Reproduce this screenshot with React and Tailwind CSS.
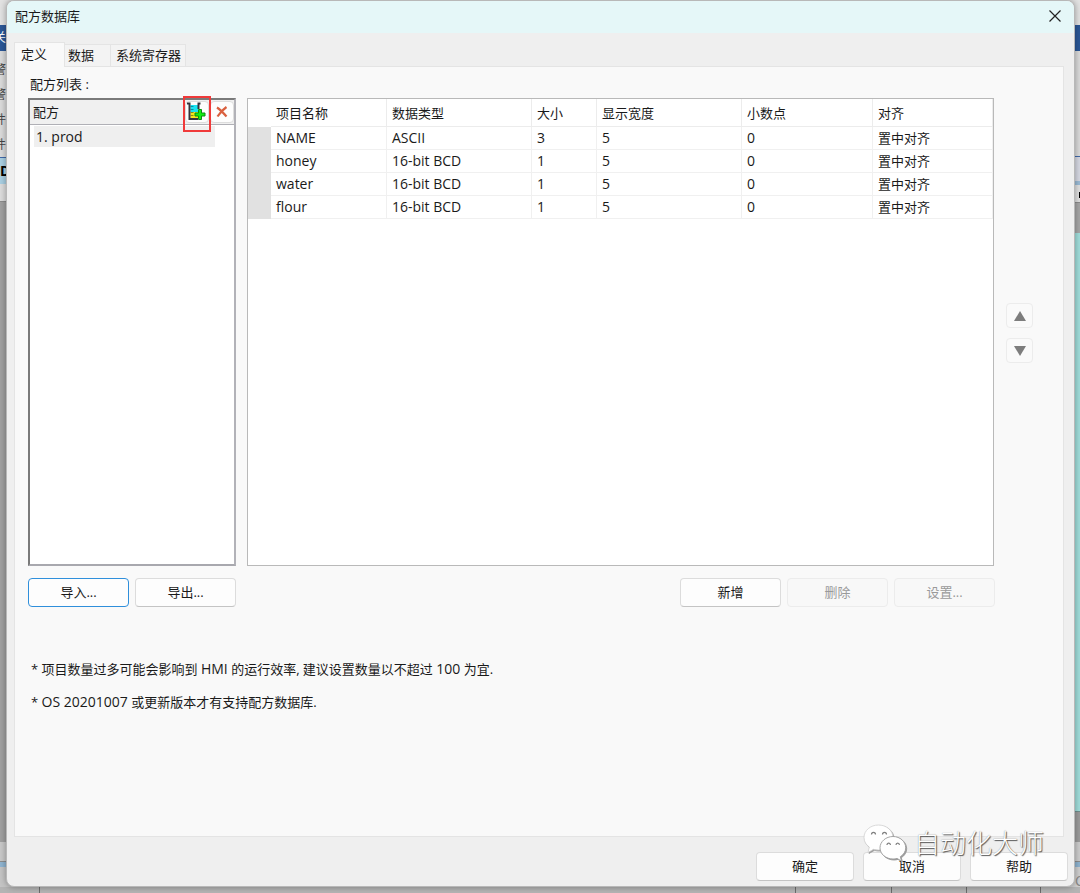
import React from "react";

const COLUMNS = ["项目名称", "数据类型", "大小", "显示宽度", "小数点", "对齐"];

const ITEMS = [
  ["NAME", "ASCII", "3", "5", "0", "置中对齐"],
  ["honey", "16-bit BCD", "1", "5", "0", "置中对齐"],
  ["water", "16-bit BCD", "1", "5", "0", "置中对齐"],
  ["flour", "16-bit BCD", "1", "5", "0", "置中对齐"],
];

const BUTTON_STYLES = {
  normal: "border-[#dcdcdc] border-b-[#c4c4c4] bg-[#fdfdfd] text-[#1a1a1a]",
  focused: "border-[#2f8fdb] bg-[#fdfdfd] text-[#1a1a1a]",
  disabled: "border-[#ececec] bg-[#f8f8f8] text-[#9a9a9a]",
};

function PushButton({ children, kind = "normal", size = "w-[101px]" }) {
  return (
    <button
      type="button"
      disabled={kind === "disabled"}
      className={`flex h-[29px] shrink-0 items-center justify-center rounded border pb-0.5 ${size} ${BUTTON_STYLES[kind]}`}
    >
      {children}
    </button>
  );
}

function AddRecipeIcon() {
  return (
    <svg width="20" height="20" viewBox="0 0 20 20" aria-hidden="true">
      <path d="M3.500 3h7.500v7H3.500z" fill="#19e3f2" />
      <path d="M3.500 10h8v6.500h-8z" fill="#f4e81c" />
      <path d="M0 1.500h2.500v15.500h8.500" fill="none" stroke="#34343c" strokeWidth="2" />
      <path d="M13.500 1.500h-2v5.500" fill="none" stroke="#34343c" strokeWidth="2" />
      <path d="M3.500 4.500h3M3.500 7.500h3" stroke="#0b8fa4" />
      <path d="M3.500 10.500h3M3.500 13.500h3" stroke="#8f8a12" />
      <path
        d="M11.500 7.500h3v3.500h3.500v3h-3.500v3.500h-3v-3.500h-3.500v-3h3.500z"
        fill="#10ee10"
        stroke="#0a8c12"
      />
    </svg>
  );
}

function DeleteIcon() {
  return (
    <svg width="12" height="12" viewBox="0 0 12 12" aria-hidden="true">
      <path d="M1 1.500c3 2 6 5 9.500 9M10.500 1c-3.500 2.500-6.500 5.500-9 9.500" fill="none" stroke="#d9603f" strokeWidth="2.200" />
    </svg>
  );
}

function Backdrop() {
  return (
    <div className="absolute inset-0 -z-10 flex flex-col overflow-hidden bg-[#b4b4b4]" aria-hidden="true">
      <div className="flex min-h-0 flex-1 justify-between">
        <div className="flex w-4 flex-col bg-[#a0a0a0] text-xs text-[#444444]">
          <div className="h-[25px] bg-[#e2e2e2]" />
          <div className="flex h-[26px] items-center bg-[#2b5797] text-white">
            <span className="-ml-1.5">关</span>
          </div>
          <div className="flex h-[106px] flex-col justify-around bg-[#dadada] pt-1.5">
            {["警", "警", "件", "件"].map((glyph, i) => (
              <span key={i} className="-ml-1.5 leading-6">{glyph}</span>
            ))}
          </div>
          <div className="flex h-[27px] items-center border-t border-[#3f68a8] bg-[#a9cfe2] text-sm font-bold text-black">
            <span>D</span>
          </div>
          <div className="h-[18px] border-b border-[#8c8c8c] bg-[#dcdcdc]" />
          <div className="flex-1 bg-[#a0a0a0]" />
          <div className="h-[19px] bg-[#c8c8c8]" />
          <div className="h-1.5 border-t border-[#8c8c8c] bg-[#8fb4d0]" />
          <div className="h-5 bg-[#c4c4c4]" />
        </div>
        <div className="flex w-4 flex-col bg-[#cccccc]">
          <div className="h-[25px] bg-[#e2e2e2]" />
          <div className="h-[26px] bg-[#2b5797]" />
          <div className="h-[105px] bg-[#dadada]" />
          <div className="h-[25px] border-t border-[#3f68a8] bg-[#d6d8e2]" />
          <div className="h-1 bg-[#9bbbd5]" />
          <div className="flex h-[18px] items-end justify-end gap-1 border-b border-[#8c8c8c] bg-[#e0e0e0] pb-1">
            <div className="h-1 w-px bg-[#444444]" />
            <div className="h-1.5 w-px bg-black" />
          </div>
          <div className="h-[30px] bg-[#a6a6a6]" />
          <div className="flex flex-1 flex-col bg-[#a1dedb] pl-2.5">
            <div className="flex-3" />
            <div className="flex-2 border-l border-[#5a6666]" />
            <div className="flex-1" />
          </div>
          <div className="h-[31px] border-t border-[#6f8f8e] bg-[#9c9c9c]" />
          <div className="h-[19px] bg-[#cccccc]" />
          <div className="h-1.5 border-t border-[#8c8c8c] bg-[#8fb4d0]" />
          <div className="h-5 bg-[#cfcfcf] pl-[11px] text-sm leading-7 text-[#8a8a8a]">C</div>
        </div>
      </div>
      <div className="flex h-1.5 pr-[39px] pl-[39px]">
        <div className="w-px bg-[#6c6c6c]" />
        <div className="flex-1" />
        <div className="w-24 border-l border-[#6c6c6c]" />
        <div className="w-[75px] border-l border-[#6c6c6c]" />
        <div className="w-[75px] border-x border-[#6c6c6c]" />
      </div>
    </div>
  );
}

function Watermark() {
  return (
    <div className="pointer-events-none absolute right-9 bottom-[31px] flex items-center gap-[7px]">
      <svg width="44" height="38" viewBox="0 0 44 38" className="drop-shadow-[1px_1px_0px_#9a9a9a]" aria-hidden="true">
        <path
          d="M15.500 1C7.500 1 1 6.500 1 13.500c0 4 2 7.300 5.300 9.600L5 28.500l5.500-3.200c1.600.5 3.300.7 5 .7C23.500 26 30 20.500 30 13.500S23.500 1 15.500 1z"
          fill="#ffffff"
          stroke="#d0d0d0"
          strokeWidth="0.800"
        />
        <path d="M8.500 10.500a2 2.200 0 1 1 4 0M19.500 10.500a2 2.200 0 1 1 4 0" fill="none" stroke="#808080" strokeWidth="1.200" />
        <path
          d="M30 12.500c-7 0-13 5-13 11.300S23 35 30 35c1.400 0 2.700-.2 4-.6l4.500 2.600-1.200-4.300c3.300-2 5.400-5.200 5.400-8.900C42.700 17.500 37 12.500 30 12.500z"
          fill="#ffffff"
          stroke="#9c9c9c"
          strokeWidth="0.900"
        />
        <path d="M24 21a1.700 1.900 0 1 1 3.400 0M33 21a1.700 1.900 0 1 1 3.400 0" fill="none" stroke="#808080" strokeWidth="1.200" />
      </svg>
      <span className="text-[26px] leading-8 font-light text-white [text-shadow:1px_1px_1px_#555555,0px_0px_1px_#888888]">
        自动化大师
      </span>
    </div>
  );
}

function RecipeList() {
  return (
    <section className="flex w-[208px] shrink-0 flex-col border-2 border-[#7a7a7a] border-r-[#b2b2b8] border-b-[#a8a8ae] bg-white">
      <div className="flex h-[25px] shrink-0 items-center border-b border-[#b0b0b6] bg-[#f0f0f0] pl-[3px]">
        <h2 className="flex-1">配方</h2>
        <div className="relative">
          <button
            type="button"
            aria-label="新增配方"
            className="flex h-[22px] w-6 items-center justify-center rounded border border-[#dddddd] bg-[#fdfdfd]"
          >
            <AddRecipeIcon />
          </button>
          <div className="pointer-events-none absolute -top-[5px] -right-0.5 h-9 w-7 border-2 border-[#f03a3a]" />
        </div>
        <button
          type="button"
          aria-label="删除配方"
          className="ml-px flex h-[22px] w-6 items-center justify-center rounded border border-[#dddddd] bg-[#fdfdfd]"
        >
          <DeleteIcon />
        </button>
      </div>
      <ul className="mr-[19px] ml-1 pt-px text-sm">
        <li>
          <button type="button" className="block h-[21px] w-full bg-[#efefef] pl-0.5 text-left leading-5">
            1. prod
          </button>
        </li>
      </ul>
    </section>
  );
}

function ItemTable() {
  return (
    <div className="min-w-0 flex-1 overflow-hidden border border-[#b9b9b9] bg-white">
      <table className="w-full table-fixed border-separate border-spacing-0 text-left">
        <colgroup>
          <col className="w-[23px]" />
          <col className="w-[116px]" />
          <col className="w-[145px]" />
          <col className="w-[65px]" />
          <col className="w-[145px]" />
          <col className="w-[131px]" />
          <col />
        </colgroup>
        <thead>
          <tr className="h-7">
            <td className="p-0" />
            {COLUMNS.map((name) => (
              <th key={name} scope="col" className="border-r border-b border-[#ececec] p-0 pl-[5px] font-normal">
                {name}
              </th>
            ))}
          </tr>
        </thead>
        <tbody className="text-sm">
          {ITEMS.map((row) => (
            <tr key={row[0]} className="h-[23px]">
              <td className="bg-[#e1e1e1] p-0" />
              {row.map((value, i) => (
                <td
                  key={i}
                  className="border-r border-b border-[#f0f0f0] p-0 pl-[5px] leading-5 last:text-[13px]"
                >
                  {value}
                </td>
              ))}
            </tr>
          ))}
        </tbody>
      </table>
    </div>
  );
}

function MoveButton({ label, points }) {
  return (
    <button
      type="button"
      aria-label={label}
      className="flex h-[25px] w-[27px] items-center justify-center rounded border border-[#ececec] bg-[#fafafa]"
    >
      <svg width="12" height="10" viewBox="0 0 12 10" aria-hidden="true">
        <polygon points={points} fill="#7d7d7d" />
      </svg>
    </button>
  );
}

function Latin({ children }) {
  return <span className="text-sm leading-5">{children}</span>;
}

export default function App() {
  return (
    <div className="relative isolate flex min-h-screen flex-col pr-[5px] pb-1.5 pl-1.5 font-['Open_Sans','Noto_Sans_CJK_SC',sans-serif] text-[13px] leading-5 text-[#1a1a1a]">
      <Backdrop />
      <main className="flex flex-1 flex-col overflow-hidden rounded-lg border border-[#b8b8b8] bg-[#efefef] shadow-[0px_0px_6px_rgba(0,0,0,0.35)]">
        <header className="flex h-8 shrink-0 items-center justify-between bg-[#e5f7f8] pr-3 pb-0.5 pl-2">
          <h1>配方数据库</h1>
          <button type="button" aria-label="关闭" className="p-px">
            <svg width="12" height="12" viewBox="0 0 12 12" aria-hidden="true">
              <path d="M0.500 0.500l11 11M11.500 0.500l-11 11" stroke="#222222" strokeWidth="1.200" />
            </svg>
          </button>
        </header>

        <div role="tablist" className="relative -mb-px flex items-end pt-[9px] pl-[7px]">
          <button
            type="button"
            role="tab"
            aria-selected="true"
            className="h-[25px] w-[51px] border border-b-0 border-[#e4e4e4] bg-[#f9f9f9] pb-0.5 pl-1.5 text-left"
          >
            定义
          </button>
          <button
            type="button"
            role="tab"
            aria-selected="false"
            className="h-[23px] w-[46px] border border-l-0 border-[#e4e4e4] bg-[#f3f3f3] pb-0.5 pl-[3px] text-left"
          >
            数据
          </button>
          <button
            type="button"
            role="tab"
            aria-selected="false"
            className="h-[23px] w-[75px] border border-l-0 border-[#e4e4e4] bg-[#f3f3f3] pb-0.5 pl-[5px] text-left"
          >
            系统寄存器
          </button>
        </div>

        <div className="mr-2.5 ml-[7px] flex flex-1 flex-col border border-[#e4e4e4] bg-[#f9f9f9] pr-[30px] pl-[13px]">
          <p className="flex h-[31px] items-center pt-0.5 pl-0.5">配方列表 :</p>
          <div className="flex min-h-80 flex-1">
            <RecipeList />
            <div className="ml-[11px] flex min-w-0 flex-1 gap-3">
              <ItemTable />
              <div className="flex w-[27px] flex-col items-center justify-center gap-2.5 pt-0.5">
                <MoveButton label="上移" points="6,0 12,10 0,10" />
                <MoveButton label="下移" points="0,0 12,0 6,10" />
              </div>
            </div>
          </div>
          <div className="mt-3 mr-[38px] flex justify-between">
            <div className="flex gap-1.5">
              <PushButton kind="focused">导入...</PushButton>
              <PushButton>导出...</PushButton>
            </div>
            <div className="flex gap-1.5">
              <PushButton>新增</PushButton>
              <PushButton kind="disabled">删除</PushButton>
              <PushButton kind="disabled">设置...</PushButton>
            </div>
          </div>
          <div className="mt-[52px] mb-[124px] flex flex-col gap-[13px] pl-[3px]">
            <p>
              * 项目数量过多可能会影响到 <Latin>HMI</Latin> 的运行效率, 建议设置数量以不超过 <Latin>100</Latin> 为宜.
            </p>
            <p>
              * <Latin>OS 20201007</Latin> 或更新版本才有支持配方数据库.
            </p>
          </div>
        </div>

        <footer className="flex justify-end gap-[9px] pt-[15px] pr-1.5 pb-[5px]">
          <PushButton size="w-[98px]">确定</PushButton>
          <PushButton size="w-[98px]">取消</PushButton>
          <PushButton size="w-[98px]">帮助</PushButton>
        </footer>
      </main>
      <Watermark />
    </div>
  );
}
